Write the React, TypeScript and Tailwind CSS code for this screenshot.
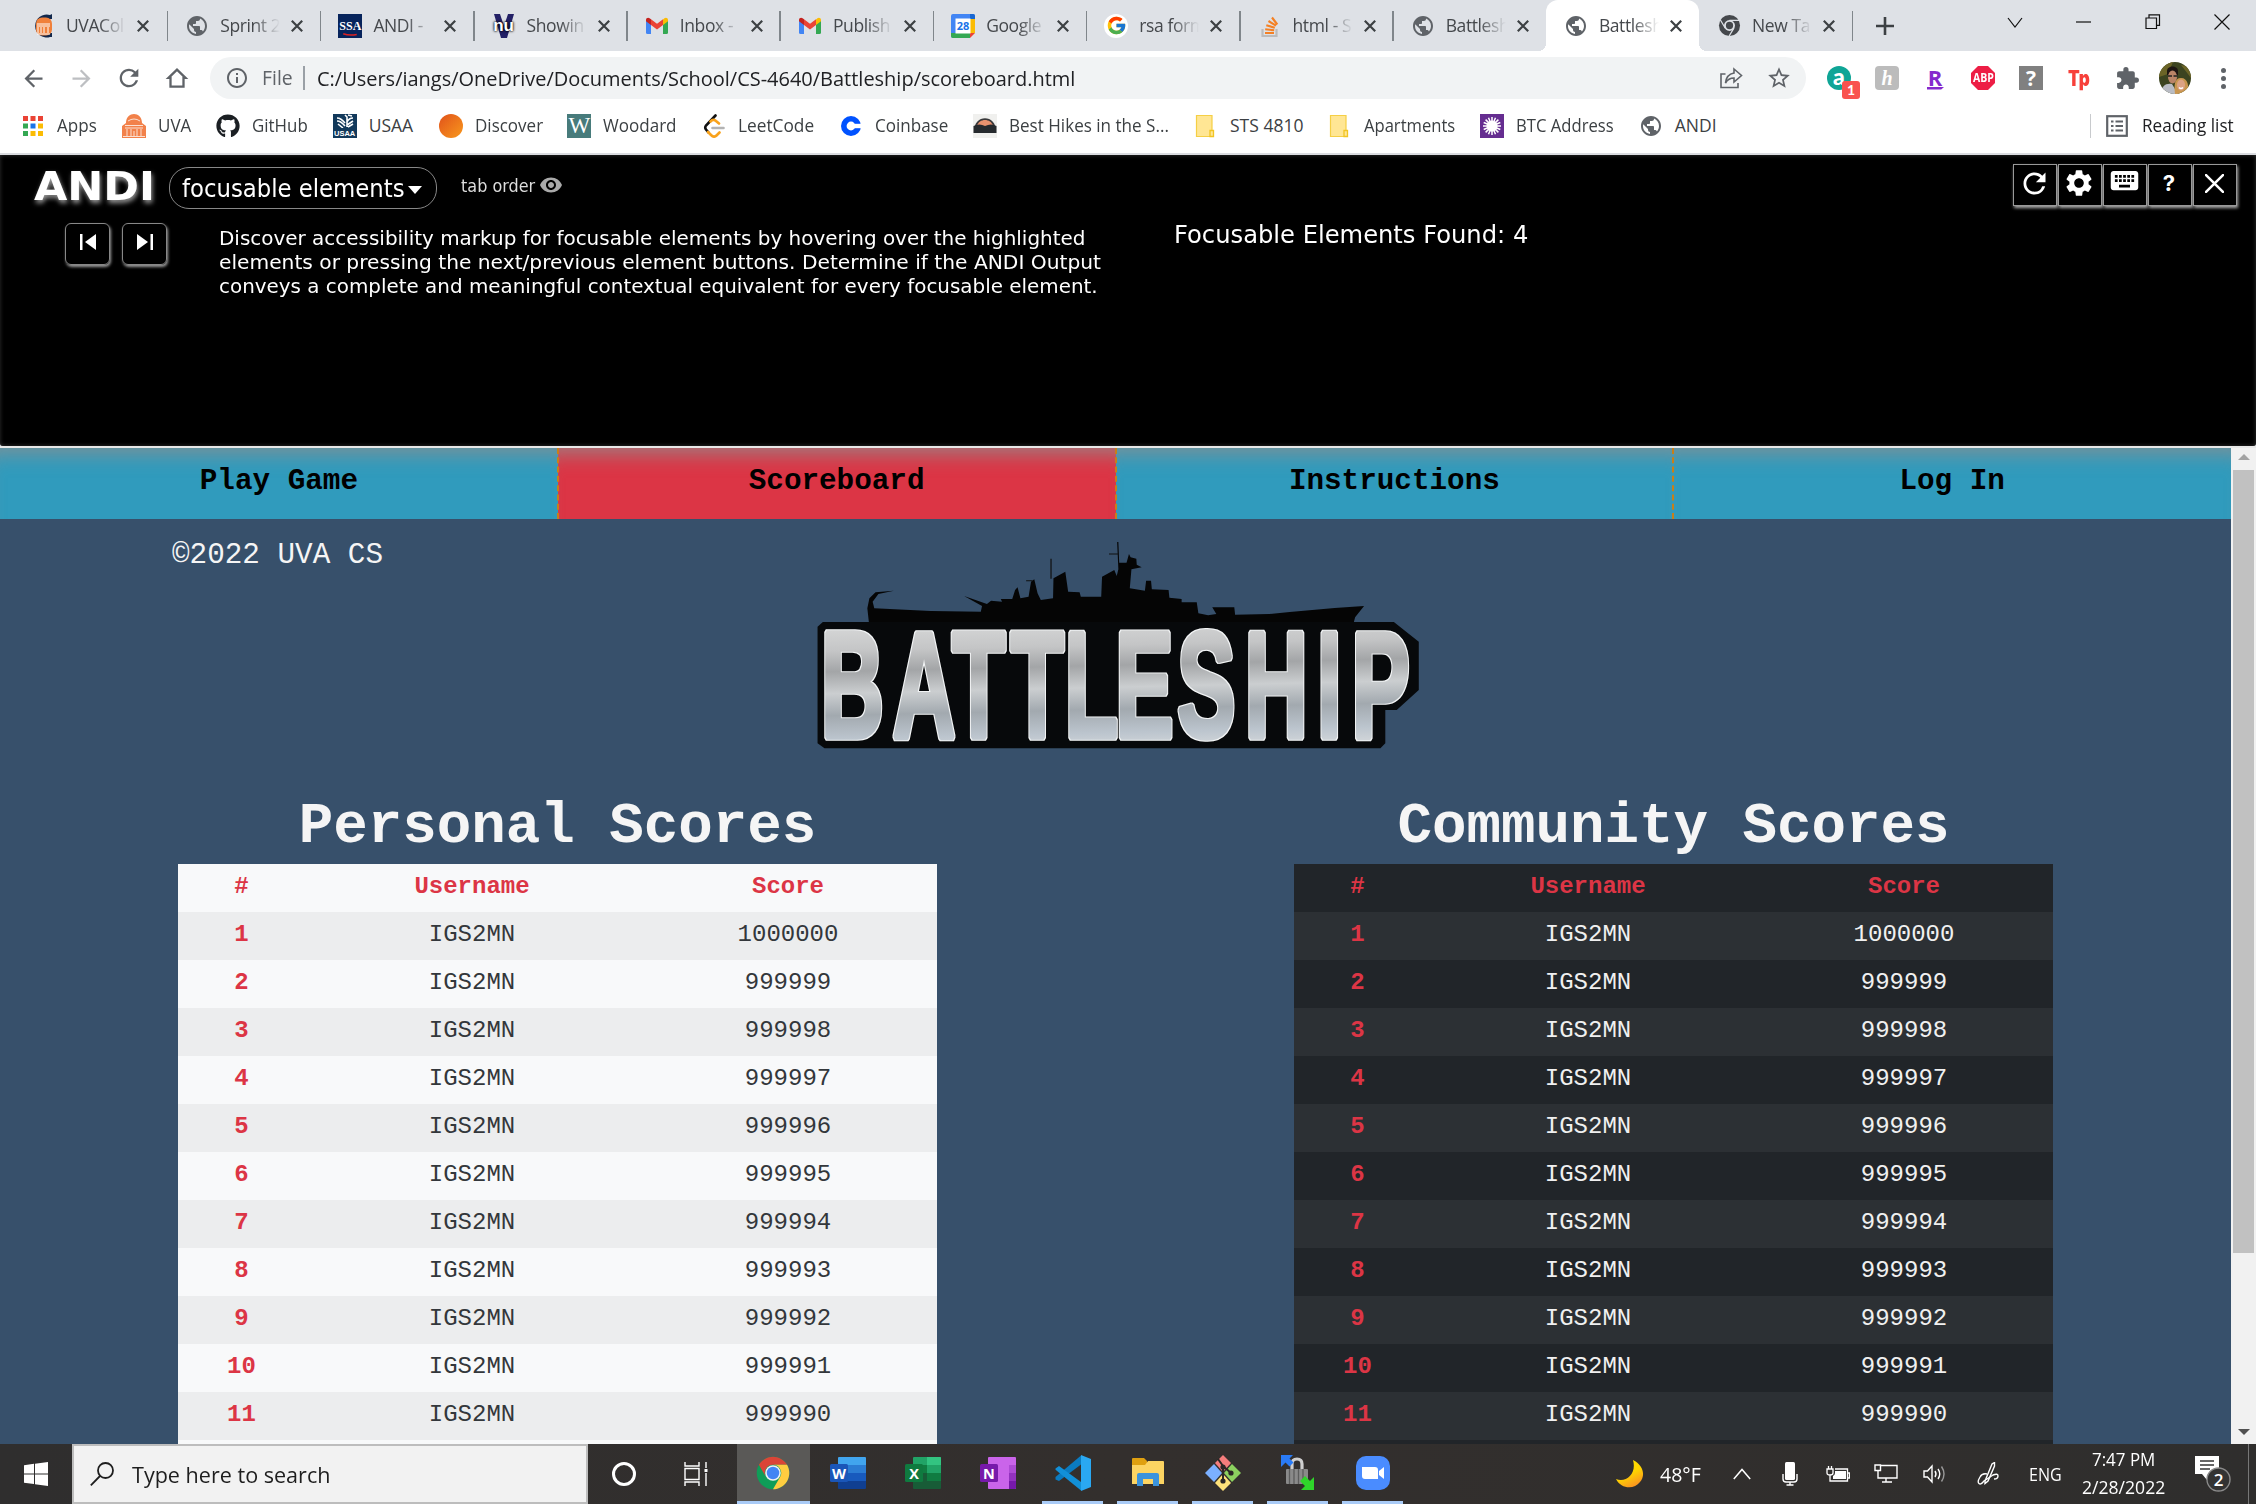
import { useLayoutEffect, useRef } from "react";
import type { ReactNode } from "react";
import {
  MdArrowBack,
  MdArrowForward,
  MdRefresh,
  MdInfoOutline,
  MdStarBorder,
  MdExtension,
  MdSettings,
  MdKeyboard,
  MdPublic,
  MdRemoveRedEye,
} from "react-icons/md";
import { FaGithub } from "react-icons/fa";
import { FcGoogle } from "react-icons/fc";

/* Text condensed or widened horizontally so that it takes exactly w pixels. */
function Fit({ w, children, className = "" }: { w: number; children: ReactNode; className?: string }) {
  const inner = useRef<HTMLSpanElement>(null);
  useLayoutEffect(() => {
    const el = inner.current;
    if (el && el.offsetWidth > 0) el.style.transform = `scaleX(${w / el.offsetWidth})`;
  }, [w]);
  return (
    <span className={`inline-block shrink-0 whitespace-nowrap ${className}`} style={{ width: w }}>
      <span ref={inner} className="inline-block origin-left">
        {children}
      </span>
    </span>
  );
}

/* ---------- favicons ---------- */

const Globe = () => <MdPublic className="h-[26px] w-[26px] text-[#5f6368]" />;

const CavalierIcon = () => (
  <svg viewBox="0 0 24 24" className="h-6 w-6">
    <path d="M22 0v5h-3a8 8 0 1 0 0 14h3v4h-2a11.500 11.500 0 1 1 0-22z" fill="#12284c" />
    <rect x="6" y="3.500" width="16" height="18" rx="6" fill="#f0803a" />
    <path d="M7 10h13M7 12h13M8 13v6M11 13v6M14 13v6M18 13v6M7 20h13" stroke="#fff" strokeWidth="1" />
  </svg>
);

const SsaIcon = () => (
  <span className="flex h-6 w-6 flex-col items-center bg-[#07245c] pt-[5px]">
    <span className="font-['Liberation_Serif'] text-[12px] font-bold leading-[14px] text-white">SSA</span>
    <svg viewBox="0 0 20 4" className="h-[3px] w-5">
      <path d="M1 1q8 3 18 1" stroke="#d22" strokeWidth="2" fill="none" />
    </svg>
  </span>
);

const NuIcon = () => (
  <span className="relative flex h-6 w-6 items-center justify-center">
    <svg viewBox="0 0 24 24" className="absolute h-6 w-6">
      <path d="M2 0h6l4 12 4-12h6l-7 24h-6z" fill="#232066" />
    </svg>
    <span className="relative font-['Liberation_Sans'] text-[17px] font-bold leading-none text-white [text-shadow:0_0_3px_#000,0_0_2px_#000]">
      nu
    </span>
  </span>
);

const GmailIcon = () => (
  <svg viewBox="0 0 24 24" className="h-6 w-6">
    <path d="M1 6v12.500A1.500 1.500 0 0 0 2.500 20H6V9.500z" fill="#4285f4" />
    <path d="M18 9.500V20h3.500a1.500 1.500 0 0 0 1.500-1.500V6z" fill="#34a853" />
    <path d="M18 5.500V11l5-3.800V6c0-2-2.200-3-3.600-1.700z" fill="#fbbc04" />
    <path d="M6 11V5.200l6 4.600 6-4.600V11l-6 4.600z" fill="#ea4335" />
    <path d="M1 6v1.200L6 11V5.200L4.600 4.300C3.200 3 1 4 1 6z" fill="#c5221f" />
  </svg>
);

const CalendarIcon = () => (
  <svg viewBox="0 0 24 24" className="h-6 w-6">
    <path d="M0 2a2 2 0 0 1 2-2h20a2 2 0 0 1 2 2v17h-5v5H2a2 2 0 0 1-2-2z" fill="#4285f4" />
    <path d="M19 0h3a2 2 0 0 1 2 2v3h-5z" fill="#1967d2" />
    <path d="M19 5h5v14h-5z" fill="#fbbc04" />
    <path d="M0 19h19v5H2a2 2 0 0 1-2-2z" fill="#34a853" />
    <path d="M19 19h5l-5 5z" fill="#ea4335" />
    <path d="M4.500 4.500h15v15h-15z" fill="#fff" />
    <text x="12" y="16" textAnchor="middle" fontFamily="Open Sans" fontWeight="700" fontSize="11" fill="#1a73e8">
      28
    </text>
  </svg>
);

const GoogleTabIcon = () => (
  <span className="flex h-6 w-6 items-center justify-center rounded-full bg-white">
    <FcGoogle className="h-[21px] w-[21px]" />
  </span>
);

const StackIcon = () => (
  <svg viewBox="0 0 24 24" className="h-6 w-6">
    <path d="M4.500 15v7h14v-7" stroke="#bcbbbb" strokeWidth="2.200" fill="none" />
    <path d="M7 19h9M7.200 15.300l9 1M8.300 11.200l8.500 2.600M10.500 7l7.500 4.700M14 3.500l5.300 7" stroke="#f48024" strokeWidth="2.100" fill="none" />
  </svg>
);

const ChromeMono = () => (
  <svg viewBox="0 0 24 24" className="h-[23px] w-[23px]">
    <circle cx="12" cy="12" r="11" fill="#45484c" />
    <circle cx="12" cy="12" r="5.700" fill="#dee1e6" />
    <circle cx="12" cy="12" r="3.800" fill="#45484c" />
    <path d="M12 6.700h10M7.500 14.600 2.500 6.300M16.600 14.700l-5 8.300" stroke="#dee1e6" strokeWidth="1.300" />
  </svg>
);

const tabs: { title: string; icon: ReactNode }[] = [
  { title: "UVACol", icon: <CavalierIcon /> },
  { title: "Sprint 2", icon: <Globe /> },
  { title: "ANDI -", icon: <SsaIcon /> },
  { title: "Showin", icon: <NuIcon /> },
  { title: "Inbox -", icon: <GmailIcon /> },
  { title: "Publish", icon: <GmailIcon /> },
  { title: "Google", icon: <CalendarIcon /> },
  { title: "rsa form", icon: <GoogleTabIcon /> },
  { title: "html - S", icon: <StackIcon /> },
  { title: "Battlesh", icon: <Globe /> },
  { title: "Battlesh", icon: <Globe /> },
  { title: "New Ta", icon: <ChromeMono /> },
];

function TabStrip() {
  return (
    <div className="flex h-[51px] bg-[#dee1e6] pl-[14px]">
      {tabs.map((t, i) => {
        const active = i === 10;
        return (
          <div
            key={i}
            className={`relative flex h-full w-[153.2px] shrink-0 items-center ${i === 0 ? "pl-[16px]" : "pl-[18px]"} ${
              active ? "rounded-t-[12px] bg-white" : ""
            }`}
          >
            {active && (
              <>
                <span className="absolute bottom-0 -left-2 h-2 w-2 bg-[radial-gradient(circle_at_0_0,transparent_8px,#fff_8px)]" />
                <span className="absolute bottom-0 -right-2 h-2 w-2 bg-[radial-gradient(circle_at_100%_0,transparent_8px,#fff_8px)]" />
              </>
            )}
            <span className="flex w-6 justify-center">{t.icon}</span>
            <span
              className={`w-[60px] overflow-hidden whitespace-nowrap text-[17.500px] tracking-[-0.400px] text-[#45484c] [mask-image:linear-gradient(90deg,#000_55%,transparent_100%)] ${
                i === 0 ? "ml-[12px]" : "ml-[11px]"
              }`}
            >
              {t.title}
            </span>
            <svg viewBox="0 0 12 12" className="ml-[11px] h-3 w-3">
              <path d="M.8.800 11.200 11.200M11.200.800.800 11.200" stroke="#3c4043" strokeWidth="2.200" />
            </svg>
            {i !== 9 && !active && <span className="absolute -right-px top-[11px] h-[30px] w-[1.500px] bg-[#80868b]" />}
          </div>
        );
      })}
      <svg viewBox="0 0 18 18" className="ml-[24px] mt-[17px] h-[18px] w-[18px] shrink-0">
        <path d="M9 0v18M0 9h18" stroke="#3c4043" strokeWidth="2.600" />
      </svg>
      <div className="ml-auto flex h-[43px] items-center">
        {["M1 4l7 9 7-9", "M0 8h15", "M4 4V.800h10.500v10.500H11.500M1 4h10.500v10.500H1z", "M.500.500l15 15M15.500.500l-15 15"].map((d) => (
          <span key={d} className="flex w-[69px] justify-center">
            <svg viewBox="0 0 16 16" className="h-4 w-4 overflow-visible">
              <path d={d} stroke="#111" strokeWidth="1.200" fill="none" />
            </svg>
          </span>
        ))}
      </div>
    </div>
  );
}

/* ---------- address bar ---------- */

function Avatar() {
  return (
    <svg viewBox="0 0 32 32" className="h-8 w-8">
      <clipPath id="av">
        <circle cx="16" cy="16" r="16" />
      </clipPath>
      <g clipPath="url(#av)">
        <rect width="32" height="32" fill="#3c4420" />
        <path d="M0 0h14l-5 12-9 3zM22 3l10 2v11z" fill="#6b6427" />
        <path d="M2 32c0-8 5-11 11-10l6 10z" fill="#b9bcc4" />
        <path d="M8 9c0-6 11-6 11 0v4H8z" fill="#1d1512" />
        <ellipse cx="13.500" cy="15" rx="4.500" ry="6.500" fill="#b98467" />
        <path d="M9 14h4M14.500 14h4" stroke="#222" strokeWidth="1.600" />
        <path d="M16 32c-1-8-1-16 6-16s8 8 7 16z" fill="#c9964f" />
        <ellipse cx="22" cy="23" rx="4" ry="5.500" fill="#dca284" />
        <path d="M20 25.500q2 2 4 0" stroke="#fff" strokeWidth="1.400" fill="none" />
      </g>
    </svg>
  );
}

const Cell = ({ children }: { children: ReactNode }) => (
  <span className="flex w-12 shrink-0 items-center justify-center">{children}</span>
);

function Toolbar() {
  return (
    <div className="flex h-[54px] items-center bg-white pl-[9px]">
      <Cell>
        <MdArrowBack className="h-[27px] w-[27px] text-[#5f6368]" />
      </Cell>
      <Cell>
        <MdArrowForward className="h-[27px] w-[27px] text-[#bdbfc2]" />
      </Cell>
      <Cell>
        <MdRefresh className="h-[28px] w-[28px] text-[#5f6368]" />
      </Cell>
      <Cell>
        <svg viewBox="0 0 20 20" className="h-5 w-5 overflow-visible">
          <path d="M3.500 18.700h13V9.800h2L10 1.600 1.500 9.800h2z" fill="none" stroke="#5f6368" strokeWidth="2.300" />
        </svg>
      </Cell>
      <div className="ml-[9px] flex h-[42px] w-[1596px] items-center rounded-full bg-[#f1f3f4] pl-[15px]">
        <MdInfoOutline className="h-[24px] w-[24px] text-[#5f6368]" />
        <Fit w={31} className="ml-[13px] text-[20px] text-[#5f6368]">
          File
        </Fit>
        <span className="ml-[10px] h-[24px] w-[1.500px] bg-[#9aa0a6]" />
        <Fit w={758} className="ml-[12px] text-[20.500px] text-[#202124]">
          C:/Users/iangs/OneDrive/Documents/School/CS-4640/Battleship/scoreboard.html
        </Fit>
        <span className="ml-auto mr-[3px] flex">
          <Cell>
            <svg viewBox="0 0 24 24" className="h-6 w-6">
              <path d="M6.500 8H2v13.500h17V17" fill="none" stroke="#5f6368" strokeWidth="1.600" />
              <path d="M15 3l7.500 6.500L15 16v-4c-4 0-6.500 1.500-8.500 5C7 11.500 9.500 8 15 7z" fill="none" stroke="#5f6368" strokeWidth="1.600" />
            </svg>
          </Cell>
          <Cell>
            <MdStarBorder className="h-[26px] w-[26px] text-[#5f6368]" />
          </Cell>
        </span>
      </div>
      <div className="ml-[9px] flex items-center">
        <Cell>
          <span className="relative flex h-6 w-6 items-center justify-center rounded-full bg-[#0fa596] font-['Lato'] text-[23px] font-black leading-none text-white">
            <span className="-mt-[4px]">a</span>
            <span className="absolute left-[15px] top-[15px] flex h-[18px] w-[18px] items-center justify-center rounded-[3px] bg-[#f9534f] text-[14px] font-bold leading-none">
              1
            </span>
          </span>
        </Cell>
        <Cell>
          <span className="flex h-6 w-6 items-center justify-center rounded-[4px] bg-[#bcbcbc] font-['Liberation_Serif'] text-[20px] font-bold italic leading-none text-white">
            h
          </span>
        </Cell>
        <Cell>
          <span className="flex flex-col items-center">
            <span className="font-['Open_Sans'] text-[22px] font-bold leading-[20px] text-[#8529cd]">R</span>
            <svg viewBox="0 0 18 3" className="h-[3px] w-[17px]">
              <path d="M0 0h18l-3 2.500H0z" fill="#8529cd" />
            </svg>
          </span>
        </Cell>
        <Cell>
          <span className="relative flex h-6 w-6 items-center justify-center">
            <svg viewBox="0 0 24 24" className="absolute h-6 w-6">
              <path d="M7 0h10l7 7v10l-7 7H7l-7-7V7z" fill="#ed1e45" />
            </svg>
            <Fit w={21} className="relative text-[11.500px] font-bold leading-none text-white">
              ABP
            </Fit>
          </span>
        </Cell>
        <Cell>
          <span className="flex h-6 w-6 items-center justify-center bg-[#808080] text-[21px] font-bold leading-none text-white">?</span>
        </Cell>
        <Cell>
          <Fit w={22} className="font-['Inter'] text-[21px] font-black leading-none text-[#f7403a]">
            Tp
          </Fit>
        </Cell>
        <Cell>
          <MdExtension className="h-[25px] w-[25px] text-[#5f6368]" />
        </Cell>
        <Cell>
          <Avatar />
        </Cell>
        <Cell>
          <span className="flex flex-col gap-[3px]">
            <span className="h-[5px] w-[5px] rounded-full bg-[#5f6368]" />
            <span className="h-[5px] w-[5px] rounded-full bg-[#5f6368]" />
            <span className="h-[5px] w-[5px] rounded-full bg-[#5f6368]" />
          </span>
        </Cell>
      </div>
    </div>
  );
}

/* ---------- bookmarks ---------- */

const appColors = ["#ea4335", "#ea4335", "#ea4335", "#34a853", "#1a73e8", "#fbbc04", "#34a853", "#fbbc04", "#fbbc04"];

const AppsIcon = () => (
  <svg viewBox="0 0 20 20" className="h-5 w-5">
    {appColors.map((c, i) => (
      <rect key={i} x={(i % 3) * 7.5} y={Math.floor(i / 3) * 7.5} width="5" height="5" fill={c} />
    ))}
  </svg>
);

const RotundaIcon = () => (
  <svg viewBox="0 0 24 24" className="h-6 w-6">
    <path d="M0 24V12L4 9c0-12 16-12 16 0l4 3v12z" fill="#f2814a" />
    <path d="M3 11.500h18M3 14h18M5 15v7M9 15v7M12 17v5M15 15v7M19 15v7M6 7q6-4 12 0M1 22.500h22" stroke="#fbe0d2" strokeWidth="1" fill="none" />
  </svg>
);

const UsaaIcon = () => (
  <span className="flex h-6 w-6 flex-col items-center justify-between bg-[#12395b]">
    <svg viewBox="0 0 20 14" className="h-[14px] w-5">
      <path d="M10 1l2 2v10M2 4q4 0 8 5M2 7q4 0 8 5M3 10l5 4M18 4q-4 0-6 4M18 7l-6 4M13 1l4 1M18 10l-5 3" stroke="#fff" strokeWidth="1.600" fill="none" />
    </svg>
    <span className="font-['Liberation_Sans'] text-[7.500px] font-bold leading-[9px] text-white">USAA</span>
  </span>
);

const LeetIcon = () => (
  <svg viewBox="0 0 24 24" className="h-6 w-6">
    <path d="M13.500 1.500 4 11.500q-1.500 2 0 4l2.500 3" stroke="#111" strokeWidth="2.600" fill="none" strokeLinecap="round" />
    <path d="M8.500 7.500q3-3 5.500-.5l3 2.500M6 18l3 3q3 3 5.500.5l3-3" stroke="#f9a21b" strokeWidth="2.600" fill="none" strokeLinecap="round" />
    <path d="M10.500 14h11" stroke="#b3b3b3" strokeWidth="2.600" strokeLinecap="round" />
  </svg>
);

const HikeIcon = () => (
  <svg viewBox="0 0 24 24" className="h-6 w-6">
    <rect width="24" height="24" fill="#f0f0ee" />
    <path d="M1 17C1 0 23 0 23 17z" fill="#3a3a3c" />
    <path d="M4 12C6 4 18 4 20 12z" fill="#e9926f" />
    <path d="M.500 12q6-3 11.500 0 6-3 11.500 0v7H.5z" fill="#262a2e" />
  </svg>
);

const FolderIcon = () => (
  <svg viewBox="0 0 24 24" className="h-6 w-6">
    <path d="M2.500 1.500H18v21H2.500z" fill="#ffe694" stroke="#f5cf45" strokeWidth="1.200" />
    <path d="M16 22.500v-6h3.500v6z" fill="#ffe694" stroke="#f2c522" strokeWidth="1.300" />
  </svg>
);

const GearBadge = () => (
  <svg viewBox="0 0 24 24" className="h-6 w-6">
    <rect width="24" height="24" fill="#652d90" />
    <path d="M12 3v18M3 12h18M5.600 5.600l12.800 12.800M18.400 5.600 5.600 18.400M8.500 3.700l7 16.600M3.700 15.500l16.600-7M3.700 8.500l16.600 7M8.500 20.300l7-16.600" stroke="#fff" strokeWidth="1.500" />
    <circle cx="12" cy="12" r="5.500" fill="#fff" />
  </svg>
);

const bookmarks: { label: string; w: number; icon: ReactNode }[] = [
  { label: "Apps", w: 40, icon: <AppsIcon /> },
  { label: "UVA", w: 33, icon: <RotundaIcon /> },
  { label: "GitHub", w: 56, icon: <FaGithub className="h-6 w-6 text-[#1b1f23]" /> },
  { label: "USAA", w: 45, icon: <UsaaIcon /> },
  { label: "Discover", w: 68, icon: <span className="h-6 w-6 rounded-full bg-linear-to-br from-[#e0501a] to-[#f8981d]" /> },
  {
    label: "Woodard",
    w: 74,
    icon: (
      <span className="flex h-6 w-6 items-center justify-center bg-[#477b7b] font-['Liberation_Serif'] text-[23px] leading-none text-white">
        W
      </span>
    ),
  },
  { label: "LeetCode", w: 76, icon: <LeetIcon /> },
  {
    label: "Coinbase",
    w: 73,
    icon: (
      <svg viewBox="0 0 24 24" className="h-6 w-6">
        <circle cx="12" cy="12" r="7.200" fill="none" stroke="#0052ff" strokeWidth="5.600" />
        <path d="M15 9.800h8v4.400h-8z" fill="#fff" />
      </svg>
    ),
  },
  { label: "Best Hikes in the S...", w: 160, icon: <HikeIcon /> },
  { label: "STS 4810", w: 73, icon: <FolderIcon /> },
  { label: "Apartments", w: 91, icon: <FolderIcon /> },
  { label: "BTC Address", w: 98, icon: <GearBadge /> },
  { label: "ANDI", w: 42, icon: <Globe /> },
];

function Bookmarks() {
  return (
    <div className="flex h-[50px] items-center border-b-2 border-[#dadce0] bg-white pb-[7px] pl-[21px] pr-[22px]">
      <div className="flex items-center gap-[24.900px]">
        {bookmarks.map((b) => (
          <span key={b.label} className="flex items-center gap-3">
            <span className="flex w-6 justify-center">{b.icon}</span>
            <Fit w={b.w} className="text-[17.500px] text-[#3c4043]">
              {b.label}
            </Fit>
          </span>
        ))}
      </div>
      <span className="ml-auto h-6 w-[1.500px] bg-[#c8cacd]" />
      <svg viewBox="0 0 22 22" className="ml-[15px] mr-px h-[22px] w-[22px]">
        <rect x="1.200" y="1.200" width="19.600" height="19.600" fill="none" stroke="#5f6368" strokeWidth="2.200" />
        <path d="M5 6.500h2.500M5 11h2.500M5 15.500h2.500M9.500 6.500H17M9.500 11H17M9.500 15.500H17" stroke="#5f6368" strokeWidth="2" />
      </svg>
      <Fit w={92} className="ml-[13px] text-[17.500px] text-[#202124]">
        Reading list
      </Fit>
    </div>
  );
}

/* ---------- ANDI panel ---------- */

const panelButtons: ReactNode[] = [
  <MdRefresh key="r" className="h-[33px] w-[33px]" />,
  <MdSettings key="s" className="h-[32px] w-[32px]" />,
  <MdKeyboard key="k" className="-mt-[5px] h-[33px] w-[33px]" />,
  <span key="q" className="font-['Inter'] text-[22px] font-bold">?</span>,
  <svg key="x" viewBox="0 0 18 18" className="h-[19px] w-[19px]">
    <path d="M1 1l16 16M17 1 1 17" stroke="#fff" strokeWidth="2.400" strokeLinecap="round" />
  </svg>,
];

const message = [
  { t: "Discover accessibility markup for focusable elements by hovering over the highlighted", w: 867 },
  { t: "elements or pressing the next/previous element buttons. Determine if the ANDI Output", w: 882 },
  { t: "conveys a complete and meaningful contextual equivalent for every focusable element.", w: 879 },
];

function AndiPanel() {
  const nav = "flex h-[42px] w-[45px] items-center justify-center rounded-[6px] border border-[#888] pb-[5px] shadow-[1px_2px_3px_#999]";
  return (
    <div className="h-[291px] rounded-b-[3px] bg-black font-['DejaVu_Sans'] text-white shadow-[inset_0_0_4px_#333]">
      <div className="flex h-[60px]">
        <Fit w={121} className="ml-[34px] mt-[9px] text-[39.500px] font-bold leading-[44px] [text-shadow:1px_3px_5px_#999]">
          ANDI
        </Fit>
        <div className="ml-[14px] mt-[12px] flex h-[42px] w-[268px] items-center rounded-[20px] border border-[#888] pl-[12px] pt-[2px]">
          <Fit w={223} className="text-[24px]">
            focusable elements
          </Fit>
          <span className="ml-[3px] mt-px border-x-[7px] border-t-[8px] border-x-transparent border-t-white" />
        </div>
        <Fit w={74} className="ml-[24px] mt-[19px] text-[18px] leading-[24px] text-[#ddd]">
          tab order
        </Fit>
        <MdRemoveRedEye className="ml-[4px] mt-[18px] h-6 w-6 text-[#aaa]" />
        <div className="ml-auto mr-[19px] mt-[9px] flex h-[42px] gap-px">
          {panelButtons.map((b, i) => (
            <span
              key={i}
              className="flex h-[42px] w-[44px] items-center justify-center border border-[#999] bg-black pb-1 pr-[2px] shadow-[1px_2px_3px_#aaa]"
            >
              {b}
            </span>
          ))}
        </div>
      </div>
      <div className="flex pt-[8px]">
        <div className="ml-[65px] flex gap-[12px]">
          <span className={nav}>
            <svg viewBox="0 0 18 18" className="h-[18px] w-[18px]">
              <path d="M1 1h2.500v16H1zM17 1v16L6 9z" fill="#fff" />
            </svg>
          </span>
          <span className={nav}>
            <svg viewBox="0 0 18 18" className="h-[18px] w-[18px]">
              <path d="M14.500 1H17v16h-2.500zM1 1v16l11-8z" fill="#fff" />
            </svg>
          </span>
        </div>
        <div className="ml-[52px] mt-[3px] w-[900px] text-[20px] leading-[24px]">
          {message.map((m) => (
            <div key={m.t} className="h-6">
              <Fit w={m.w}>{m.t}</Fit>
            </div>
          ))}
        </div>
        <Fit w={354} className="ml-[55px] -mt-[2px] text-[24px] leading-[29px]">
          Focusable Elements Found: 4
        </Fit>
      </div>
    </div>
  );
}

/* ---------- game page ---------- */

function Logo() {
  return (
    <svg viewBox="0 0 1568 690" preserveAspectRatio="none" className="h-[230px] w-[640px]">
      <defs>
        <linearGradient id="steel" x1="0" y1="0" x2="0.080" y2="1">
          <stop offset="0.100" stopColor="#dcdddd" />
          <stop offset="0.300" stopColor="#c4c5c6" />
          <stop offset="0.420" stopColor="#a3a5a7" />
          <stop offset="0.550" stopColor="#cbced0" />
          <stop offset="0.680" stopColor="#a2a9af" />
          <stop offset="0.820" stopColor="#bcc5ce" />
          <stop offset="0.950" stopColor="#dcdedf" />
        </linearGradient>
        <filter id="rim" x="-5%" y="-20%" width="110%" height="140%" colorInterpolationFilters="sRGB">
          <feMorphology in="SourceAlpha" operator="dilate" radius="6 3.500" result="wide" />
          <feFlood floodColor="#f2f4f5" />
          <feComposite in2="wide" operator="in" result="light" />
          <feMerge>
            <feMergeNode in="light" />
            <feMergeNode in="SourceGraphic" />
          </feMerge>
        </filter>
      </defs>
      <path
        d="M170 290 165 235 170 205 185 187 230 182 192 192 178 215 182 235 320 243 443 245 446 228 402 198 458 222 468 212 495 215 492 207 520 207 527 180 533 172 540 205 560 200 566 155 574 148 582 190 590 210 620 205 621 145 650 125 657 185 685 187 688 200 738 200 740 140 770 120 776 138 780 118 777 36 780 36 782 98 800 98 806 72 810 82 824 86 825 104 837 112 812 118 808 175 845 182 848 152 860 152 862 178 903 180 905 203 935 207 935 217 972 217 976 250 1000 256 1020 252 1010 232 1064 232 1066 254 1150 252 1200 246 1310 234 1382 228 1360 262 1354 290z"
        fill="#050505"
      />
      <path d="M757 72h24M615 86v60M554 152h16" stroke="#111" strokeWidth="3" />
      <path d="M56 276H1455L1516 335V480L1462 540H1434V640L1422 655H60L43 640V290z" fill="#07090b" />
      <text
        transform="translate(0 621) scale(0.47 1)"
        x="110 483 794 1098 1381 1645 1968 2320 2696 2876"
        y="0"
        fontFamily="Liberation Sans"
        fontWeight="700"
        fontSize="452"
        fill="url(#steel)"
        stroke="url(#steel)"
        strokeWidth="16"
        strokeLinejoin="bevel"
        filter="url(#rim)"
      >
        BATTLESHIP
      </text>
    </svg>
  );
}

const scores = Array.from({ length: 11 }, (_, i) => 1000000 - i);

function Scores({ title, dark = false }: { title: string; dark?: boolean }) {
  const base = dark ? "bg-[#212529] text-[#f0f0f0]" : "bg-[#f8f9fa] text-[#33373b]";
  const stripe = dark ? "bg-[#2c3034] text-[#f0f0f0]" : "bg-[#ecedee] text-[#33373b]";
  const grid = "grid h-12 grid-cols-[127px_334px_298px] text-center text-[24px] leading-[46px]";
  return (
    <div className="w-[759px] shrink-0">
      <h1 className="h-[74px] pt-[2px] text-center text-[57.500px] font-bold leading-[70px] text-[#f5f5f5]">{title}</h1>
      <div className={`${grid} ${base} font-bold`}>
        <span className="text-[#dc3545]">#</span>
        <span className="text-[#dc3545]">Username</span>
        <span className="text-[#dc3545]">Score</span>
      </div>
      {scores.map((score, i) => (
        <div key={score} className={`${grid} ${i % 2 === 0 ? stripe : base}`}>
          <span className="font-bold text-[#dc3545]">{i + 1}</span>
          <span>IGS2MN</span>
          <span>{score}</span>
        </div>
      ))}
      <div className={`h-1 ${base}`} />
    </div>
  );
}

const links = ["Play Game", "Scoreboard", "Instructions", "Log In"];

function GamePage() {
  return (
    <div className="flex h-[998px] overflow-hidden border-t-2 border-[#e8e8e8]">
      <div className="h-full w-[2231px] overflow-hidden bg-[#37506b] font-['Liberation_Mono']">
        <nav className="grid h-[71px] grid-cols-4 bg-[#309bbd]">
          {links.map((l, i) => (
            <span
              key={l}
              className={`relative h-[71px] pt-[17px] text-center text-[29.300px] font-bold leading-[33px] text-black shadow-[inset_0_22px_20px_-16px_#8f8f8fcc] ${
                i === 1 ? "bg-[#dc3545]" : ""
              }`}
            >
              {l}
              {i > 0 && <span className="absolute -left-px top-0 h-full border-l-2 border-dashed border-[#c77f1a]" />}
            </span>
          ))}
        </nav>
        <div className="flex h-[271px] pt-[11px]">
          <span className="ml-[172px] w-[628px] pt-[9px] text-[29.300px] leading-[33px] text-[#f5f5f5]">©2022 UVA CS</span>
          <Logo />
        </div>
        <div className="flex gap-[357px] pl-[178px]">
          <Scores title="Personal Scores" />
          <Scores title="Community Scores" dark />
        </div>
      </div>
      <div className="flex w-[25px] flex-col items-center bg-[#f1f1f1]">
        <span className="mt-[6px] border-x-[6px] border-b-[6px] border-x-transparent border-b-[#a3a3a3]" />
        <span className="mt-[10px] h-[783px] w-[21px] bg-[#c1c1c1]" />
        <span className="mb-[9px] mt-auto border-x-[6px] border-t-[6px] border-x-transparent border-t-[#505050]" />
      </div>
    </div>
  );
}

/* ---------- taskbar ---------- */

/* c: four page bands from top to bottom, then the colour of the letter tile. */
function OfficeIcon({ letter, c, children }: { letter: string; c: string[]; children?: ReactNode }) {
  return (
    <svg viewBox="0 0 36 34" className="h-[34px] w-9">
      <path d="M8 2a1 1 0 0 1 1-1h26a1 1 0 0 1 1 1v7H8z" fill={c[0]} />
      <path d="M8 9h28v8H8z" fill={c[1]} />
      <path d="M8 17h28v8H8z" fill={c[2]} />
      <path d="M8 25h28v7a1 1 0 0 1-1 1H9a1 1 0 0 1-1-1z" fill={c[3]} />
      {children}
      <rect y="8" width="18" height="18" rx="1.500" fill={c[4]} />
      <text x="9" y="22.500" textAnchor="middle" fontFamily="Open Sans" fontWeight="700" fontSize="14.500" fill="#fff">
        {letter}
      </text>
    </svg>
  );
}

const ChromeIcon = () => (
  <svg viewBox="0 0 48 48" className="h-[34px] w-[34px]">
    <circle cx="24" cy="24" r="23" fill="#0f9d58" />
    <path d="M4.100 12.500A23 23 0 0 1 43.900 12.500H24A11.500 11.500 0 0 0 14 29.800z" fill="#db4437" />
    <path d="M43.900 12.500A23 23 0 0 1 24 47L34 29.800A11.500 11.500 0 0 0 24 12.500z" fill="#ffcd40" />
    <circle cx="24" cy="24" r="11" fill="#f1f1f1" />
    <circle cx="24" cy="24" r="8.800" fill="#4285f4" />
  </svg>
);

const CodeIcon = () => (
  <svg viewBox="0 0 36 36" className="h-9 w-9">
    <path d="M26 9.500 4 26 .5 24.500v-2.500L26 .5z" fill="#0a7bc0" />
    <path d="M.5 13.500 4 11l22 16v8.500L.5 14.800z" fill="#1290d8" />
    <path d="M26 0l10 4v28l-10 4z" fill="#2aa8f2" />
  </svg>
);

const ExplorerIcon = () => (
  <svg viewBox="0 0 34 30" className="h-[30px] w-[34px]">
    <path d="M1 1q0-1 1-1h11l3 3v5H1z" fill="#dfa010" />
    <path d="M1 7h13l3-4h15q1 0 1 1v22H1z" fill="#fcd462" />
    <path d="M6 28V17q0-2 2-2h18q2 0 2 2v11h-6v-7H12v7z" fill="#3b93dc" />
  </svg>
);

const GitIcon = () => (
  <svg viewBox="0 0 36 36" className="h-9 w-9">
    <path d="M18 0l8 8-8 9-8-9z" fill="#f57d7c" />
    <path d="M27 9l9 9-9 9-8-9z" fill="#8cd15f" />
    <path d="M9 9l8 9-8 9-9-9z" fill="#7bb0ff" />
    <path d="M18 19l8 9-8 8-8-8z" fill="#ffe27a" />
    <path d="M13 4l5 7v15M18 11l8 7" stroke="#2b2726" strokeWidth="2" fill="none" />
    <circle cx="18" cy="12" r="2.600" fill="#2b2726" />
    <circle cx="18" cy="26" r="2.600" fill="#2b2726" />
    <circle cx="26" cy="18" r="2.600" fill="#2b2726" />
  </svg>
);

const LockIcon = () => (
  <svg viewBox="0 0 36 36" className="h-9 w-9">
    <path d="M12 17V9q0-5 5-5t5 5v8" stroke="#cfcfcf" strokeWidth="3.200" fill="none" />
    <rect x="6" y="14" width="22" height="15" rx="1" fill="#8a8a8a" />
    <path d="M9.500 14v15M14 14v15M18.500 14v15M23 14v15" stroke="#5c5c5c" strokeWidth="1.300" />
    <path d="M1 0h12L9.500 3.500l4 4-4 4-4-4L1 12z" fill="#2a7bf6" />
    <path d="M34 35H21l4-4-5-5 5-5 5 5 4-4z" fill="#2fd52a" />
  </svg>
);

const ZoomIcon = () => (
  <svg viewBox="0 0 34 34" className="h-[34px] w-[34px]">
    <rect width="34" height="34" rx="10" fill="#4a8cff" />
    <path d="M6 11h13q3 0 3 3v9H9q-3 0-3-3zM23 15l5-4v12l-5-4z" fill="#fff" />
  </svg>
);

const apps: { icon: ReactNode; open: boolean }[] = [
  { icon: <OfficeIcon letter="W" c={["#41a5ee", "#2b7cd3", "#185abd", "#103f91", "#1a56b8"]} />, open: false },
  {
    icon: (
      <OfficeIcon letter="X" c={["#21a366", "#107c41", "#185c37", "#185c37", "#0f7a3f"]}>
        <path d="M22 1h13a1 1 0 0 1 1 1v7H22z" fill="#33c481" />
        <path d="M22 9h14v8H22z" fill="#21a366" />
        <path d="M22 17h14v8H22z" fill="#107c41" />
      </OfficeIcon>
    ),
    open: false,
  },
  {
    icon: (
      <OfficeIcon letter="N" c={["#ca64ea", "#ca64ea", "#ca64ea", "#ca64ea", "#7719aa"]}>
        <path d="M29 9h7v8h-7z" fill="#ae4bd5" />
        <path d="M29 17h7v8h-7z" fill="#9332bf" />
        <path d="M29 25h7v7a1 1 0 0 1-1 1h-6z" fill="#7719aa" />
      </OfficeIcon>
    ),
    open: false,
  },
  { icon: <CodeIcon />, open: true },
  { icon: <ExplorerIcon />, open: true },
  { icon: <GitIcon />, open: true },
  { icon: <LockIcon />, open: true },
  { icon: <ZoomIcon />, open: true },
];

function Taskbar() {
  return (
    <div className="flex h-[60px] items-center bg-linear-to-r from-[#2f2e2e] via-[#332f2d] to-[#2f2e2d] text-white">
      <span className="flex w-[72px] justify-center">
        <svg viewBox="0 0 24 24" className="h-6 w-6">
          <path d="M0 3.200 10 1.800v9.600H0zM11 1.700 24 0v11.400H11zM0 12.400h10V22L0 20.700zM11 12.400h13V24l-13-1.800z" fill="#fff" />
        </svg>
      </span>
      <div className="flex h-[60px] w-[516px] items-center border-2 border-[#bdbdbd] bg-[#f2f2f2] pl-4 text-[#1e1e1e]">
        <svg viewBox="0 0 24 24" className="h-6 w-6">
          <circle cx="15.500" cy="8.500" r="7.500" fill="none" stroke="#1e1e1e" strokeWidth="1.800" />
          <path d="M10 14 .8 23.300" stroke="#1e1e1e" strokeWidth="1.800" />
        </svg>
        <Fit w={198} className="ml-[18px] mt-px text-[22px]">
          Type here to search
        </Fit>
      </div>
      <span className="flex w-[72px] justify-center">
        <span className="h-6 w-6 rounded-full border-[3.500px] border-white" />
      </span>
      <span className="flex w-[72px] justify-center">
        <svg viewBox="0 0 24 24" className="h-6 w-6">
          <path d="M1 0v4h14V0M1 24v-4h14v4M1 6.500h14v11H1zM22 0v6M22 11v13" stroke="#fff" strokeWidth="1.400" fill="none" />
          <rect x="20.500" y="7" width="3" height="3" fill="#fff" />
        </svg>
      </span>
      <span className="ml-[5px] flex h-full w-[73px] items-center justify-center border-b-[3px] border-[#a9cbf7] bg-[#5a5957] pr-px">
        <ChromeIcon />
      </span>
      {apps.map((a, i) => (
        <span key={i} className="flex h-full w-[75px] justify-center">
          <span
            className={`flex h-full w-[61px] items-center justify-center border-b-[3px] ${
              a.open ? "border-[#a9cbf7]" : "border-transparent"
            }`}
          >
            {a.icon}
          </span>
        </span>
      ))}
      <div className="ml-auto flex h-full items-center">
        <svg viewBox="0 0 28 28" className="h-7 w-7">
          <defs>
            <linearGradient id="moon" x1="0" y1="0" x2="0.500" y2="1">
              <stop offset="0" stopColor="#ffe600" />
              <stop offset="0.600" stopColor="#ffd400" />
              <stop offset="1" stopColor="#fb9a1e" />
            </linearGradient>
          </defs>
          <path d="M17 0c10 5 13 15 7 22-6 8-19 7-24-3 10 4 21-5 17-19z" fill="url(#moon)" />
        </svg>
        <Fit w={41} className="ml-[16px] mt-[2px] text-[20px]">
          48°F
        </Fit>
        <svg viewBox="0 0 18 12" className="ml-[32px] h-3 w-[18px]">
          <path d="M.800 11 9 1.500 17.200 11" stroke="#fff" strokeWidth="1.500" fill="none" />
        </svg>
        <svg viewBox="0 0 16 24" className="ml-[31px] h-6 w-4">
          <rect x="3" width="10" height="18" rx="1.500" fill="#fff" />
          <path d="M1 12v5q0 3 3 3h8q3 0 3-3v-5M8 20v3M4.500 23h7" stroke="#fff" strokeWidth="1.400" fill="none" />
        </svg>
        <svg viewBox="0 0 24 18" className="ml-[28px] h-[18px] w-6">
          <path d="M1 4h6v4q0 2-3 2t-3-2zM2.500 4V1M5.500 4V1M4 10v6h2M9 4h12.500v12H6M21.500 8h2v5h-2" stroke="#fff" strokeWidth="1.300" fill="none" />
          <path d="M9 6h11v8H7v-3q2-1 2-3z" fill="#fff" />
        </svg>
        <svg viewBox="0 0 24 20" className="ml-[24px] h-5 w-6">
          <path d="M7 1.500h16v12.500H4V8M1 1h5.500v5.500H1zM4 7v7M12 14v4M8 18h10" stroke="#fff" strokeWidth="1.400" fill="none" />
        </svg>
        <svg viewBox="0 0 24 20" className="ml-[25px] h-5 w-6">
          <path d="M1 7h3.500L9 2v16l-4.500-5H1zM12 7q2 3 0 6M15 5q3.500 5 0 10" stroke="#fff" strokeWidth="1.400" fill="none" />
          <path d="M18.500 2.500q5 7.500 0 15" stroke="#999" strokeWidth="1.400" fill="none" />
        </svg>
        <svg viewBox="0 0 22 24" className="ml-[30px] h-6 w-[22px]">
          <path d="M8 19 15 2l2.500-1.500V4L11 19l-3 2.500z" stroke="#fff" strokeWidth="1.400" fill="none" />
          <path d="M10 12q-5-1-7 3-3 5-1 6.500t5-2.500l9-6q5-2 5 1t-4 3" stroke="#fff" strokeWidth="1.400" fill="none" />
        </svg>
        <Fit w={33} className="ml-[30px] text-[17.500px]">
          ENG
        </Fit>
        <div className="ml-[19px] flex w-[84px] flex-col items-center pb-[2px] text-[18px] leading-[28px]">
          <Fit w={63}>7:47 PM</Fit>
          <Fit w={83}>2/28/2022</Fit>
        </div>
        <span className="relative ml-[30px] h-9 w-9">
          <svg viewBox="0 0 36 36" className="h-9 w-9 overflow-visible">
            <path d="M0 0h24v18H13l-1 6-5-6H0z" fill="#fff" />
            <path d="M5 5h14M5 9h14M5 13h10" stroke="#333" strokeWidth="1.300" />
            <circle cx="23.500" cy="23.500" r="11.500" fill="#333" stroke="#8a8a8a" strokeWidth="1.400" />
          </svg>
          <span className="absolute left-[12px] top-[12px] w-[23px] text-center text-[17px] font-semibold leading-[23px]">2</span>
        </span>
        <span className="ml-[17px] mr-[7px] h-full w-px bg-[#777]" />
      </div>
    </div>
  );
}

export default function App() {
  return (
    <div className="flex h-[1504px] w-[2256px] flex-col overflow-hidden bg-[#dadce0] font-['Open_Sans',sans-serif]">
      <TabStrip />
      <Toolbar />
      <Bookmarks />
      <AndiPanel />
      <GamePage />
      <Taskbar />
    </div>
  );
}
